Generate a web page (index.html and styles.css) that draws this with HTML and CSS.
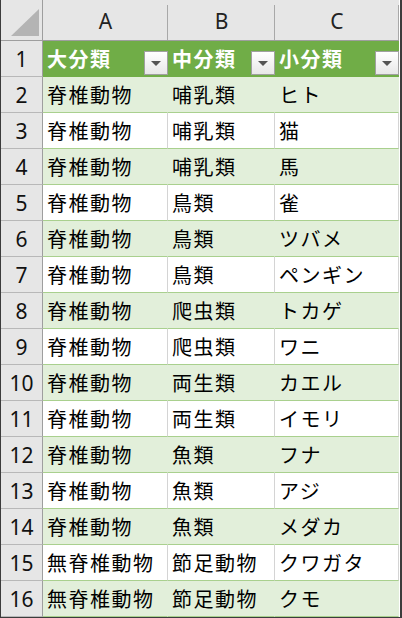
FILE: index.html
```html
<!DOCTYPE html>
<html lang="ja">
<head>
<meta charset="utf-8">
<link rel="stylesheet" href="styles.css">
</head>
<body>
<div class="sheet">
  <div class="corner"><div class="tri"></div></div>
  <div class="colhead">A</div>
  <div class="colhead">B</div>
  <div class="colhead">C</div>

  <div class="rowhead">1</div>
  <div class="th"><span>大分類</span><span class="fbtn"><i></i></span></div>
  <div class="th"><span>中分類</span><span class="fbtn"><i></i></span></div>
  <div class="th"><span>小分類</span><span class="fbtn"><i></i></span></div>

  <div class="rowhead">2</div><div class="td band">脊椎動物</div><div class="td band">哺乳類</div><div class="td band">ヒト</div>
  <div class="rowhead">3</div><div class="td">脊椎動物</div><div class="td">哺乳類</div><div class="td">猫</div>
  <div class="rowhead">4</div><div class="td band">脊椎動物</div><div class="td band">哺乳類</div><div class="td band">馬</div>
  <div class="rowhead">5</div><div class="td">脊椎動物</div><div class="td">鳥類</div><div class="td">雀</div>
  <div class="rowhead">6</div><div class="td band">脊椎動物</div><div class="td band">鳥類</div><div class="td band">ツバメ</div>
  <div class="rowhead">7</div><div class="td">脊椎動物</div><div class="td">鳥類</div><div class="td">ペンギン</div>
  <div class="rowhead">8</div><div class="td band">脊椎動物</div><div class="td band">爬虫類</div><div class="td band">トカゲ</div>
  <div class="rowhead">9</div><div class="td">脊椎動物</div><div class="td">爬虫類</div><div class="td">ワニ</div>
  <div class="rowhead">10</div><div class="td band">脊椎動物</div><div class="td band">両生類</div><div class="td band">カエル</div>
  <div class="rowhead">11</div><div class="td">脊椎動物</div><div class="td">両生類</div><div class="td">イモリ</div>
  <div class="rowhead">12</div><div class="td band">脊椎動物</div><div class="td band">魚類</div><div class="td band">フナ</div>
  <div class="rowhead">13</div><div class="td">脊椎動物</div><div class="td">魚類</div><div class="td">アジ</div>
  <div class="rowhead">14</div><div class="td band">脊椎動物</div><div class="td band">魚類</div><div class="td band">メダカ</div>
  <div class="rowhead">15</div><div class="td">無脊椎動物</div><div class="td">節足動物</div><div class="td">クワガタ</div>
  <div class="rowhead">16</div><div class="td band">無脊椎動物</div><div class="td band">節足動物</div><div class="td band">クモ</div>
</div>
</body>
</html>
```
FILE: styles.css
```css
html, body {
  margin: 0;
  padding: 0;
  background: #ffffff;
}
.sheet {
  width: 402px;
  height: 618px;
  box-sizing: border-box;
  border-left: 1px solid #3c3c3c;
  border-right: 2px solid #3c3c3c;
  border-bottom: 1px solid #3c3c3c;
  padding-right: 1px;
  display: grid;
  grid-template-columns: 42px 125px 107px 124px;
  grid-template-rows: 41px repeat(16, 36px);
  font-family: "Noto Sans CJK JP", "Noto Sans", sans-serif;
  color: #000;
}
.corner {
  background: #e6e6e6;
  border-bottom: 1px solid #9e9e9e;
  border-right: 1px solid #9e9e9e;
  box-sizing: border-box;
  padding: 9px 2px 4px 10px;
}
.tri {
  width: 28px;
  height: 27px;
  background: #b4b4b4;
  clip-path: polygon(100% 0, 100% 100%, 0 100%);
}
.colhead {
  background: #e6e6e6 linear-gradient(#a8a8a8, #a8a8a8) right 5px / 1px 100% no-repeat;
  border-bottom: 1px solid #9e9e9e;
  box-sizing: border-box;
  display: flex;
  align-items: center;
  justify-content: center;
  padding-top: 1px;
  font-family: "Noto Sans", "Liberation Sans", sans-serif;
  font-size: 21px;
  color: #222;
}
.rowhead {
  background: #e6e6e6;
  border-right: 1px solid #9e9e9e;
  border-bottom: 1px solid #b8b8b8;
  box-sizing: border-box;
  display: flex;
  align-items: center;
  justify-content: center;
  font-family: "Noto Sans", "Liberation Sans", sans-serif;
  font-size: 21px;
  color: #111;
}
.th {
  background: #70ad47;
  border-bottom: 1px solid #70ad47;
  box-sizing: border-box;
  display: flex;
  align-items: center;
  justify-content: space-between;
  padding-left: 4px;
  color: #fff;
  font-weight: bold;
  font-size: 20px;
  letter-spacing: 1.5px;
}
.fbtn {
  align-self: flex-end;
  margin-bottom: 1px;
  width: 24px;
  height: 24px;
  box-sizing: border-box;
  border: 1px solid #a0a0a0;
  background: linear-gradient(#ffffff, #e8e8e8);
  display: flex;
  align-items: center;
  justify-content: center;
}
.fbtn i {
  width: 0;
  height: 0;
  border-left: 5px solid transparent;
  border-right: 5px solid transparent;
  border-top: 5px solid #555;
  margin-top: 1px;
}
.td {
  background: #ffffff;
  border-right: 1px solid #d4d4d4;
  border-bottom: 1px solid #a9d08e;
  box-sizing: border-box;
  display: flex;
  align-items: center;
  padding-left: 4px;
  font-size: 20px;
  letter-spacing: 1.5px;
  white-space: nowrap;
  overflow: hidden;
}
.td.band {
  background: #e2efda;
  border-right-color: #e2efda;
}
```
